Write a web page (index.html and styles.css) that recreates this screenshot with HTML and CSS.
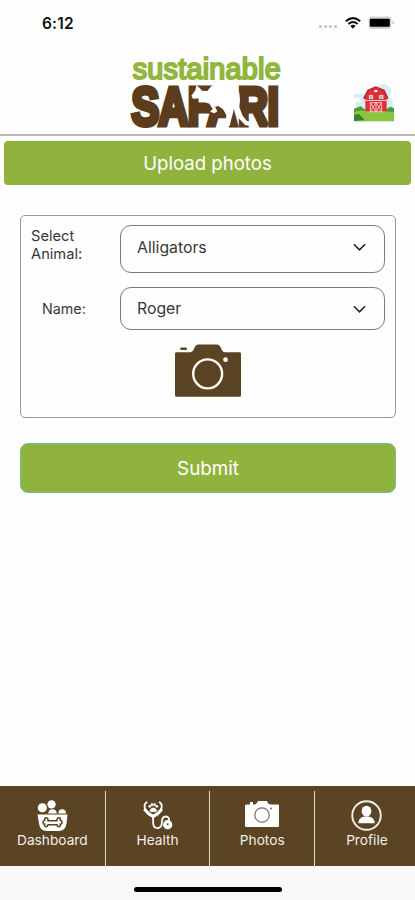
FILE: index.html
```html
<!DOCTYPE html>
<html lang="en">
<head>
<meta charset="utf-8">
<title>Upload photos</title>
<link rel="stylesheet" href="styles.css">
</head>
<body>
<div class="status">
  <span class="time">6:12</span>
  <div class="signals">
    <i></i><i></i><i></i><i></i>
    <svg class="wifi" viewBox="0 0 16 12"><g fill="none" stroke="#111" stroke-width="2"><path d="M.8 4.3Q8-2 15.2 4.3"/><path d="M3.4 7Q8 3 12.6 7"/></g><path d="M5.3 8.9Q8 6.7 10.7 8.9L8 11.8z" fill="#111"/></svg>
    <svg class="battery" viewBox="0 0 27 14"><rect x=".5" y=".5" width="23" height="12.5" rx="3.5" fill="#d2d2d2"/><path d="M24.7 4.5q2.3 2 0 4.5z" fill="#aaa"/><rect x="1.8" y="2.8" width="20" height="8" rx="1" fill="#000"/></svg>
  </div>
</div>
<header class="header">
  <svg class="logo" viewBox="0 0 510 255">
    <text class="word" x="38" y="88" textLength="444" lengthAdjust="spacing">sustainable</text>
    <text class="safari" transform="scale(.77 1)" x="45 150 264 340 460 575" y="226">SAFARI</text>
    <path fill="#fff" d="M214 137L226 121 229 105 239 114 246 122 262 123 275 107 302 99 332 100 348 113 358 129 360 150 358 172 368 197 380 212 408 222 399 229 376 226 358 207 348 184 342 174 339 189 334 207 329 228 307 230 305 225 317 215 319 195 309 178 295 168 285 170 292 184 283 190 270 185 278 177 268 161 252 155 240 145 219 146z"/>
  </svg>
  <svg class="barn" viewBox="0 0 120 105">
    <path fill="#d8ecf4" d="M0 20h38l12 12h14l-4-18Q66-8 88-10q22 4 24 26l-6 16 10 5v35H5V45h15V32H0z"/>
    <path fill="#4c9a38" d="M0 65l20-7 12 9h65l12-8 11 4v40H0z"/>
    <path fill="#8bc53f" d="M0 74q55-9 120 2v26H0z"/>
    <path fill="#387d30" d="M0 83l15-2 16 18-31 3z"/>
    <path fill="#df3038" d="M29 35L42 10 65 0l25 10 12 25-4 2v36H34V37z"/>
    <path fill="none" stroke="#b5222d" stroke-width="4" d="M29 35L42 10 65 0l25 10 12 25"/>
    <path fill="#fff" d="M61 9h9v6h-9zM45 25h12v11H45zM76 25h12v11H76zM35 40h63v2H35z"/>
    <path fill="#8db8c6" d="M47 27h8v8h-8zM78 27h8v8h-8z"/>
    <path fill="#dc3039" stroke="#f8dcdc" stroke-width="2.5" d="M49 47h34v27H49zM66 47v27M50 48l15 25M65 48L50 73M67 48l15 25M82 48L67 73"/>
  </svg>
</header>
<main class="main">
  <h1 class="banner">Upload photos</h1>
  <section class="card">
    <div class="row"><label class="label">Select<br>Animal:</label><div class="select"><span>Alligators</span><svg viewBox="0 0 14 8"><path d="M1 1l6 6 6-6"/></svg></div></div>
    <div class="row second"><label class="label name">Name:</label><div class="select short"><span>Roger</span><svg viewBox="0 0 14 8"><path d="M1 1l6 6 6-6"/></svg></div></div>
    <svg class="camera" viewBox="0 0 196 156"><path fill="#5b4424" d="M4 24H44q9 0 13-11Q61 1 70 1H124q9 0 13 12 4 11 11 11H192q4 0 4 4V152q0 4-4 4H4q-4 0-4-4V28q0-4 4-4zM16 17v-7h19v7z"/><circle cx="97" cy="88" r="43" fill="none" stroke="#fff" stroke-width="7"/><circle cx="150" cy="46" r="7" fill="#fff"/></svg>
  </section>
  <button class="submit">Submit</button>
</main>
<nav class="nav">
  <a class="tab"><svg viewBox="0 0 32 32"><g fill="#fff"><circle cx="5.5" cy="8" r="4.7"/><circle cx="15" cy="4.5" r="4.3"/><path d="M11.500 14q.5-4.500 4.500-4.500t4.500 4.500zM22 14q0-4.500 4-4.500t4 4.500zM.5 15h31l-1 9q-1 8-8 8H10q-7 0-8-8z"/></g><path d="M11.500 21.500C11.500 17 7 17.500 8 21 5 22 6 25 8 25c-1 3 3 3.500 3.500.5h9c.5 3 4.500 2.500 3.500-.5 2 0 3-3 0-4 1-3.500-3.500-4-3.500.5z" fill="none" stroke="#5b4424" stroke-width="1.600"/></svg><span>Dashboard</span></a>
  <a class="tab"><svg viewBox="0 0 32 32"><path d="M5.500 2Q1 4 3.500 10M17.500 2q4.500 2 2 8" fill="none" stroke="#fff" stroke-width="1.800"/><path d="M2.500 9.500Q6 14.500 11.500 17 17 14.500 20.500 9.500" fill="none" stroke="#fff" stroke-width="3.200"/><path d="M11.500 17v6.500q0 5.500 4.500 5.500t4.500-6q0-6 4-6 4 0 3.500 5" fill="none" stroke="#fff" stroke-width="1.900"/><g fill="#fff"><circle cx="8" cy="6.500" r="1.400"/><circle cx="10.300" cy="4.800" r="1.400"/><circle cx="13" cy="4.800" r="1.400"/><circle cx="15.300" cy="6.500" r="1.400"/><path d="M7.700 11q4-6.500 8 0-1 2-4 1-3 1-4-1z"/><circle cx="26.500" cy="25.500" r="4.800"/></g><circle cx="26.500" cy="25" r="1" fill="#5b4424"/></svg><span>Health</span></a>
  <a class="tab"><svg class="photo" viewBox="0 0 34 27"><path fill="#fff" d="M2 4.500h3V2h3v2.500h2q2-.5 3-3.500h9q1 3.500 4 3.500h7q1 0 1 1V26q0 1-1 1H1q-1 0-1-1V5.500q0-1 2-1z"/><circle cx="17" cy="15" r="7.200" fill="none" stroke="#776e61" stroke-width="1.200"/><circle cx="26" cy="8.500" r="1" fill="#776e61"/></svg><span>Photos</span></a>
  <a class="tab"><svg viewBox="0 0 32 32"><circle cx="16" cy="16" r="14.700" fill="none" stroke="#f5eee6" stroke-width="2"/><g fill="#fff"><ellipse cx="16" cy="11.500" rx="5" ry="5.500"/><path d="M7.500 24q0-6 6.500-7h4q6.500 1 6.500 7z"/></g></svg><span>Profile</span></a>
</nav>
<footer class="home"><div class="bar"></div></footer>
</body>
</html>
```
FILE: styles.css
```css
*{box-sizing:border-box}
body{margin:0;width:415px;height:900px;background:#fefefe;color:#383838;font-family:Inter,"Liberation Sans",sans-serif;display:flex;flex-direction:column;overflow:hidden}
.status{height:50px;padding:13px 20px 0 42px;display:flex;justify-content:space-between;align-items:flex-start}
.time{font-size:15.500px;line-height:21px;font-weight:600;color:#111;letter-spacing:.2px}
.signals{display:flex;gap:2px;padding-top:3px}
.signals i{width:3px;height:3px;border-radius:50%;background:#c4c4c4;margin-top:9px}
.wifi{width:16px;height:12px;margin:1px 5px 0 6px}
.battery{width:27px;height:14px}
.header{height:86px;border-bottom:2px solid #b9b6b8;display:flex;justify-content:space-between;padding-left:120px;padding-right:21px}
.logo{width:170px;height:85px;flex:none}
.word{font:400 86px "Liberation Sans",Arial,sans-serif;fill:#90b63d;stroke:#90b63d;stroke-width:6}
.safari{font:700 162px "Liberation Sans",Arial,sans-serif;fill:#5b3c1d;stroke:#5b3c1d;stroke-width:15;stroke-linejoin:miter;stroke-miterlimit:2}
.barn{width:40px;height:35px;margin-top:37px;overflow:visible}
.main{flex:1;padding-top:5px}
.banner{margin:0 4px;height:44px;border-radius:4px;background:#90b33e;color:#fff;font-size:18.600px;font-weight:400;line-height:45px;text-align:center}
.card{margin:30px 19px 0 20px;height:203px;border:1px solid #999;border-radius:5px;padding:9px 10px 0}
.row{display:flex;justify-content:space-between}
.second{margin-top:14px}
.label{font-size:14.700px;line-height:18px;padding-top:2px}
.name{padding:13px 0 0 11px;font-size:14.300px}
.select{width:265px;height:48px;border:1px solid #7c7c7c;border-radius:11px;padding:0 17px 4px 16px;display:flex;align-items:center;justify-content:space-between;font-size:15.800px}
.short{height:43px;padding-bottom:0}
.select svg{width:13px;height:8px;margin-right:1px;fill:none;stroke:#222;stroke-width:1.700;overflow:visible}
.camera{display:block;width:66px;height:53px;margin:14px 0 0 144px}
.submit{display:block;width:376px;height:50px;margin:25px 0 0 20px;border:1px solid #75b9a0;border-radius:8px;background:#90b33e;color:#fff;font:400 18.800px Inter,"Liberation Sans",sans-serif}
.nav{height:80px;background:#5b4424;display:grid;grid-template-columns:repeat(4,104.700px);padding-top:5px}
.tab{display:flex;flex-direction:column;align-items:center;padding-top:9px;color:#f3eee7;font-size:13.700px;line-height:18px}
.tab+.tab{border-left:1px solid #ded8cf}
.tab svg{width:31px;height:31px}
.tab .photo{width:34px;height:27px;margin-bottom:4px}
.home{height:34px;background:#f8f8f8;padding-top:21px}
.bar{width:148px;height:5px;border-radius:3px;background:#000;margin:0 auto}
```
